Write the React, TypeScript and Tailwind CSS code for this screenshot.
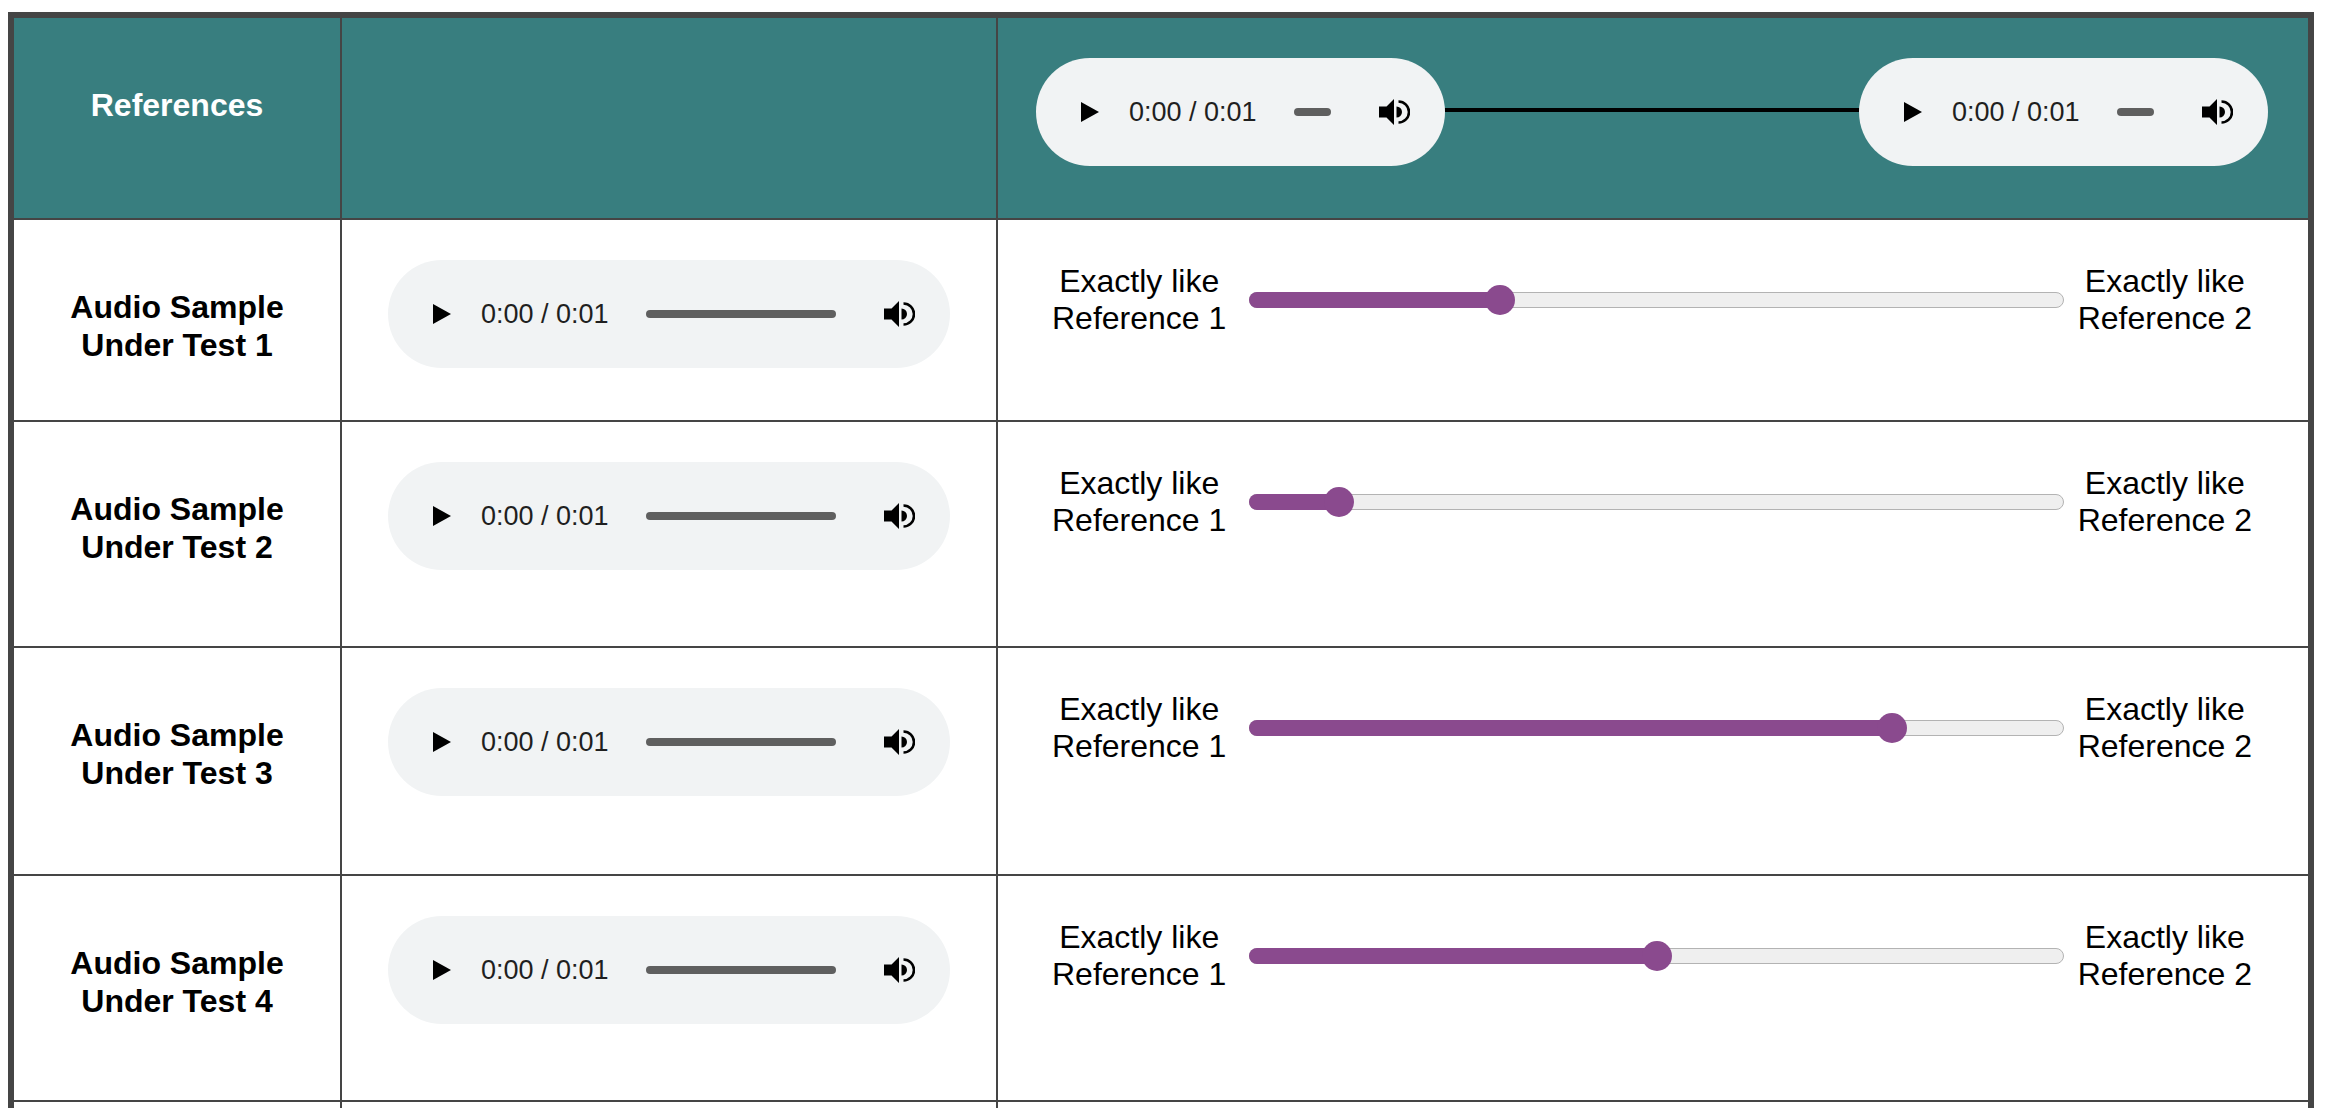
import React from "react";

function PlayIcon() {
  return (
    <svg width="18" height="20" viewBox="0 0 18 20" className="shrink-0">
      <path d="M0 0L18 10L0 20Z" fill="#000" />
    </svg>
  );
}

function VolumeIcon() {
  return (
    <svg width="31" height="28" viewBox="0 0 31 28" className="shrink-0">
      <path d="M0 8.5h7.5L15 1v26l-7.5-7.5H0z" fill="#000" />
      <path d="M17.5 8.5a5.5 5.5 0 0 1 0 11z" fill="#000" />
      <path d="M19.5 3.5a10.5 10.5 0 0 1 0 21" fill="none" stroke="#000" strokeWidth="2.6" />
    </svg>
  );
}

function Player({ className }: { className: string }) {
  return (
    <div className={"flex items-center h-[108px] rounded-full bg-[#f1f3f4] pl-[45px] pr-[35px] " + className}>
      <PlayIcon />
      <div className="ml-[30px] w-[130px] shrink-0 text-[27px] leading-none text-[#1f1f1f] whitespace-nowrap">0:00 / 0:01</div>
      <div className="ml-[35px] flex-1 h-[8px] rounded-full bg-[#5f5f5f]" />
      <div className="ml-[48px]">
        <VolumeIcon />
      </div>
    </div>
  );
}

function Slider({ value }: { value: number }) {
  return (
    <div className="flex items-center w-full">
      <div className="text-[32px] leading-[37px] text-center text-black whitespace-nowrap">
        Exactly like
        <br />
        Reference 1
      </div>
      <div className="relative flex-1 ml-[23px] mr-[14px] h-[30px] flex items-center">
        <div className="relative w-full h-[16px] rounded-full bg-[#efefef] border border-[#b3b3b3]">
          <div
            className="absolute top-[-1px] bottom-[-1px] left-[-1px] rounded-full bg-[#8a4a8e]"
            style={{ width: `calc(16px + ${value} * (100% - 30px))` }}
          />
        </div>
        <div
          className="absolute top-0 w-[30px] h-[30px] rounded-full bg-[#8a4a8e]"
          style={{ left: `calc(${value} * (100% - 30px))` }}
        />
      </div>
      <div className="text-[32px] leading-[37px] text-center text-black whitespace-nowrap">
        Exactly like
        <br />
        Reference 2
      </div>
    </div>
  );
}

const rows = [
  { n: 1, v: 0.3 },
  { n: 2, v: 0.095 },
  { n: 3, v: 0.8 },
  { n: 4, v: 0.5 },
];

export default function App() {
  return (
    <div className="min-h-screen bg-white font-['Liberation_Sans',Arial,Helvetica,sans-serif] pt-[12px] pl-[8px] overflow-hidden">
      <div className="grid grid-cols-[326px_654px_1310px] grid-rows-[200px_200px_224px_226px_224px_200px] gap-[2px] bg-[#454545] border-[6px] border-[#454545] w-[2306px]">
        {/* header */}
        <div className="bg-[#387e7f] flex justify-center pt-[69px]">
          <div className="text-white font-bold text-[32px] leading-[37px]">References</div>
        </div>
        <div className="bg-[#387e7f]" />
        <div className="bg-[#387e7f] flex items-start pt-[40px] pl-[38px] pr-[40px]">
          <div className="flex items-center w-full">
            <Player className="w-[409px] shrink-0" />
            <div className="flex-1 h-[4px] bg-black mb-[4px]" />
            <Player className="w-[409px] shrink-0" />
          </div>
        </div>

        {rows.map((r) => (
          <React.Fragment key={r.n}>
            <div className="bg-white flex justify-center pt-[68px]">
              <div className="text-black font-bold text-[32px] leading-[38px] text-center">
                Audio Sample
                <br />
                Under Test {r.n}
              </div>
            </div>
            <div className="bg-white pt-[40px] px-[46px]">
              <Player className="w-full" />
            </div>
            <div className="bg-white pt-[43px] pl-[54px] pr-[56px]">
              <Slider value={r.v} />
            </div>
          </React.Fragment>
        ))}

        <div className="bg-white" />
        <div className="bg-white" />
        <div className="bg-white" />
      </div>
    </div>
  );
}
